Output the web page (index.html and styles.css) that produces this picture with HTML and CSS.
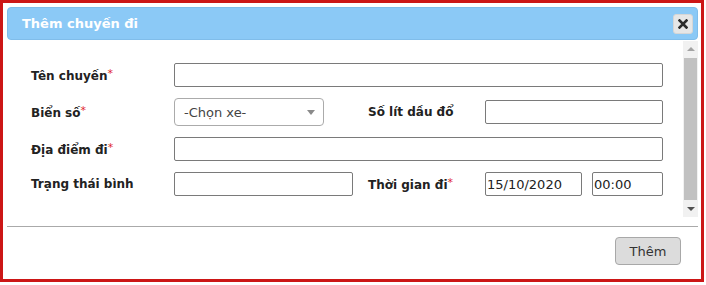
FILE: index.html
```html
<!DOCTYPE html>
<html>
<head>
<meta charset="utf-8">
<title>Thêm chuyến đi</title>
<link rel="stylesheet" href="styles.css">
</head>
<body>
  <div class="khung">
    <div class="hop-thoai">
      <div class="thanh-tieu-de">
        <span class="tieu-de">Thêm chuyến đi</span>
        <button class="nut-dong" title="Đóng">
          <svg width="10" height="10" viewBox="0 0 10 10">
            <path d="M1.5 1.5 L8.5 8.5 M8.5 1.5 L1.5 8.5" stroke="#2b2b2b" stroke-width="2.6" stroke-linecap="square"/>
          </svg>
        </button>
      </div>

      <div class="noi-dung">
        <form class="bieu-mau">
          <label class="nhan">Tên chuyến<span class="bat-buoc">*</span></label>
          <input class="o-nhap rong" type="text">

          <label class="nhan">Biển số<span class="bat-buoc">*</span></label>
          <div class="chon">
            <span>-Chọn xe-</span>
            <span class="mui-ten"></span>
          </div>
          <label class="nhan">Số lít dầu đổ</label>
          <input class="o-nhap" type="text">

          <label class="nhan">Địa điểm đi<span class="bat-buoc">*</span></label>
          <input class="o-nhap rong" type="text">

          <label class="nhan">Trạng thái bình</label>
          <input class="o-nhap vua" type="text">
          <label class="nhan">Thời gian đi<span class="bat-buoc">*</span></label>
          <div class="thoi-gian">
            <input class="o-nhap ngay" type="text" value="15/10/2020">
            <input class="o-nhap gio" type="text" value="00:00">
          </div>
        </form>

        <!-- thanh cuon ve tay cho giong giao dien cu -->
        <div class="thanh-cuon">
          <div class="mui-cuon len"></div>
          <div class="con-chay"></div>
          <div class="mui-cuon xuong"></div>
        </div>
      </div>

      <div class="vung-nut">
        <button class="nut" type="button">Thêm</button>
      </div>
    </div>
  </div>
</body>
</html>
```

FILE: styles.css
```css
html, body {
  margin: 0;
  padding: 0;
  background: #fff;
}
body {
  font-family: "DejaVu Sans", Verdana, sans-serif;
  font-size: 13px;
  color: #222;
}
.khung {
  width: 698px;
  height: 276px;
  border: 3px solid #cc1616;
}
.hop-thoai {
  padding: 4px 3px 0 4px;
}
.thanh-tieu-de {
  height: 33px;
  box-sizing: border-box;
  background-color: #8bc9f6;
  border: 1px solid #80bdea;
  border-radius: 4px;
  display: flex;
  align-items: center;
  justify-content: space-between;
  padding: 0 4px 0 14px;
}
.tieu-de {
  color: #fff;
  font-weight: bold;
  font-size: 13px;
}
.nut-dong {
  width: 20px;
  height: 20px;
  padding: 0;
  border: 1px solid #d6d6d6;
  border-radius: 3px;
  background: #e6e6e6;
  display: flex;
  align-items: center;
  justify-content: center;
}
.noi-dung {
  height: 176px;
  display: flex;
  margin-top: 1px;
}
.bieu-mau {
  flex: 1;
  margin: 0;
  padding: 22px 0 0 24px;
  display: grid;
  grid-template-columns: 143px 194px 117px 178px;
  row-gap: 11px;
  align-items: center;
  align-content: start;
}
.nhan {
  font-weight: bold;
  font-size: 12px;
  color: #222;
}
.bat-buoc {
  color: #e0262c;
  font-weight: normal;
  font-size: 11px;
  vertical-align: 3px;
}
.o-nhap {
  box-sizing: border-box;
  height: 24px;
  border: 1px solid #7a7a7a;
  border-radius: 2px;
  font-family: "DejaVu Sans", Verdana, sans-serif;
  font-size: 13px;
  color: #222;
  padding: 0 1px;
  width: 178px;
  background: #fff;
}
.o-nhap.rong {
  grid-column: 2 / -1;
  width: 489px;
}
.o-nhap.vua {
  width: 179px;
}
.chon {
  box-sizing: border-box;
  width: 150px;
  height: 28px;
  border: 1px solid #ababab;
  border-radius: 4px;
  display: flex;
  align-items: center;
  justify-content: space-between;
  padding: 0 8px 0 9px;
  color: #444;
}
.mui-ten {
  width: 0;
  height: 0;
  border-left: 4px solid transparent;
  border-right: 4px solid transparent;
  border-top: 5px solid #8a8a8a;
}
.thoi-gian {
  display: flex;
  gap: 10px;
}
.o-nhap.ngay {
  width: 97px;
}
.o-nhap.gio {
  width: 71px;
}
.thanh-cuon {
  width: 15px;
  background: #f1f1f1;
  display: flex;
  flex-direction: column;
  align-items: center;
}
.mui-cuon {
  height: 16px;
  width: 15px;
  display: flex;
  align-items: center;
  justify-content: center;
}
.mui-cuon::after {
  content: "";
  border-left: 4px solid transparent;
  border-right: 4px solid transparent;
}
.mui-cuon.len::after {
  border-bottom: 4px solid #a3a3a3;
}
.mui-cuon.xuong::after {
  border-top: 4px solid #505050;
}
.con-chay {
  flex: 1;
  width: 13px;
  margin: 1px 0;
  background: #c1c1c1;
}
.vung-nut {
  margin-top: 9px;
  border-top: 1px solid #aaa;
  padding: 10px 17px 0 0;
  display: flex;
  justify-content: flex-end;
}
.nut {
  width: 66px;
  height: 28px;
  border: 1px solid #a8a8a8;
  border-radius: 4px;
  background: #dcdcdc;
  color: #333;
  font-family: "DejaVu Sans", Verdana, sans-serif;
  font-size: 13px;
  padding: 0;
}
```
